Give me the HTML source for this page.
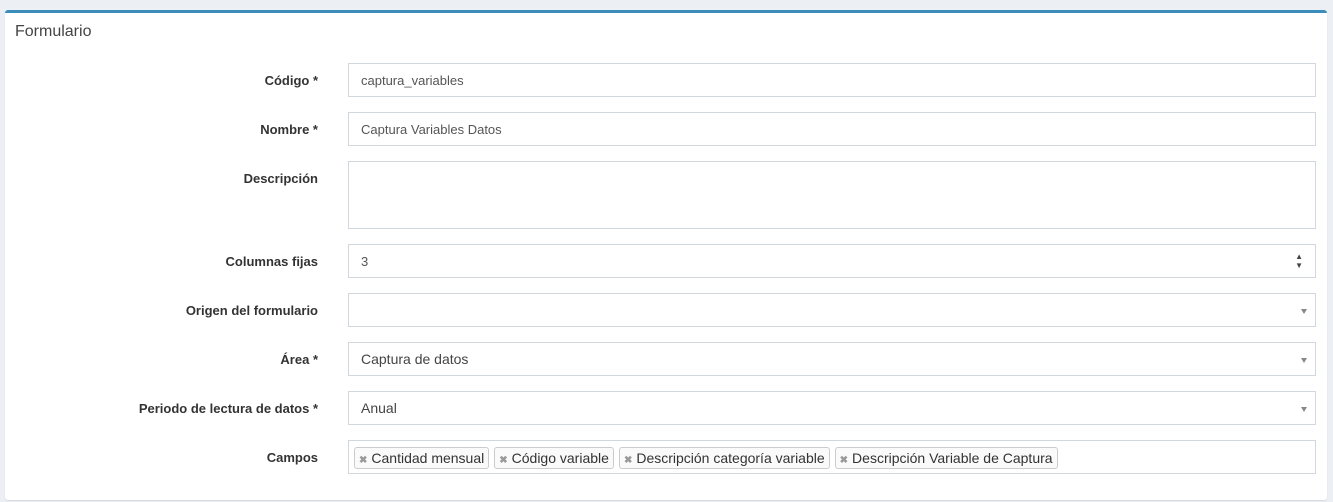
<!DOCTYPE html>
<html><head><meta charset="utf-8"><style>
body{margin:0;width:1333px;height:502px;background:#ecf0f5;font-family:"Liberation Sans",sans-serif;position:relative;overflow:hidden}
.box{position:absolute;left:5px;top:10px;width:1322px;height:487px;background:#fff;border-top:3px solid #3c8dbc;border-radius:3px;box-shadow:0 1px 1px rgba(0,0,0,.1)}
.title{position:absolute;left:10px;top:10px;font-size:16px;color:#444}
.lbl{position:absolute;right:1009px;font-size:13px;font-weight:bold;color:#333;text-align:right;white-space:nowrap}
.in{position:absolute;left:343px;height:32px;border:1px solid #d2d6de;font-size:13px;color:#555;line-height:33px;padding-left:12px;box-sizing:content-box;width:954px}
.sel{font-size:14px;color:#444}
.arr{position:absolute;right:8px;top:15px;width:0;height:0;border-left:3px solid transparent;border-right:3px solid transparent;border-top:5px solid #888}
.tag{display:inline-block;border:1px solid #ccc;border-radius:3px;background:#fafafa;font-size:14px;color:#333;height:20px;line-height:20px;padding:0 4px;margin-right:5px}
.tag b{color:#999;font-size:10px;margin-right:4px}
</style></head><body>
<div class="box">
<div class="title">Formulario</div>
<div class="lbl" style="top:60px">Código *</div>
<div class="in" style="top:50px">captura_variables</div>
<div class="lbl" style="top:109px">Nombre *</div>
<div class="in" style="top:99px">Captura Variables Datos</div>
<div class="lbl" style="top:158px">Descripción</div>
<div class="in" style="top:148px;height:66px"></div>
<div class="lbl" style="top:241px">Columnas fijas</div>
<div class="in" style="top:231px">3<span style="position:absolute;right:12px;top:0;font-size:8px;line-height:9px;padding-top:7px;color:#444">▲<br>▼</span></div>
<div class="lbl" style="top:290px">Origen del formulario</div>
<div class="in sel" style="top:280px"><span class="arr"></span></div>
<div class="lbl" style="top:339px">Área *</div>
<div class="in sel" style="top:329px">Captura de datos<span class="arr"></span></div>
<div class="lbl" style="top:388px">Periodo de lectura de datos *</div>
<div class="in sel" style="top:378px">Anual<span class="arr"></span></div>
<div class="lbl" style="top:437px">Campos</div>
<div class="in" style="top:427px;padding-left:5px;width:961px;line-height:normal"><div style="padding-top:6px"><span class="tag"><b>✖</b>Cantidad mensual</span><span class="tag"><b>✖</b>Código variable</span><span class="tag"><b>✖</b>Descripción categoría variable</span><span class="tag"><b>✖</b>Descripción Variable de Captura</span></div></div>
</div>
</body></html>
